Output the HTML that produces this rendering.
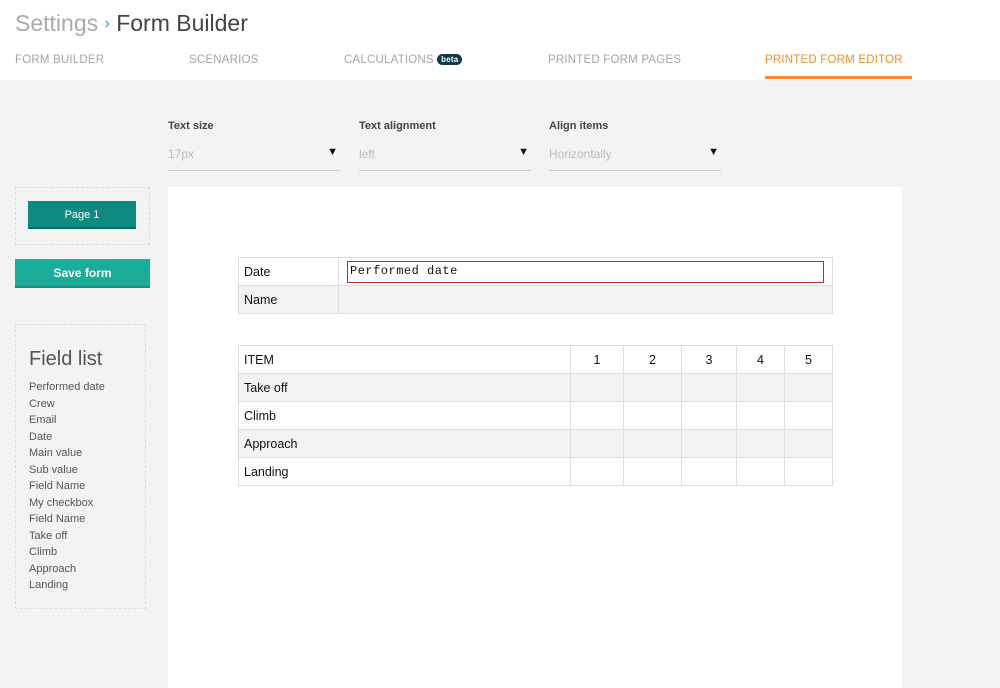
<!DOCTYPE html><html><head><style>
*{margin:0;padding:0;box-sizing:border-box}
body{width:1000px;height:688px;background:#f1f4f3;font-family:"Liberation Sans",sans-serif;position:relative;overflow:hidden}
.a{position:absolute}
.hdr{left:0;top:0;width:1000px;height:80px;background:#fff}
.tab{top:54px;font-size:11.5px;color:#a5a5a5;letter-spacing:.2px}
.lbl{font-size:11px;font-weight:bold;color:#444;top:120px}
.sel{top:143px;height:28px;border-bottom:1px solid #ccc;font-size:12px;color:#bbb;padding-top:4px}
.sel span{position:absolute;right:2px;top:3px;color:#111;font-size:11px}
table{border-collapse:collapse;font-size:12.5px;color:#111}
td{border:1px solid #ddd;height:28px;padding:0 5px}
tr.g td{background:#f1f3f2}
.fl div{font-size:11px;color:#555;height:16.5px}
</style></head><body>
<div class="a hdr"></div>
<div class="a" style="left:15px;top:10px;font-size:23px;color:#aaa">Settings <span style="color:#3aa6a0;font-size:16px;position:relative;top:-3px">›</span> <span style="color:#444">Form Builder</span></div>
<div class="a tab" style="left:15px">FORM BUILDER</div>
<div class="a tab" style="left:189px">SCENARIOS</div>
<div class="a tab" style="left:344px">CALCULATIONS <span style="background:#0f3a4a;color:#fff;font-size:8px;font-weight:bold;border-radius:8px;padding:1px 4px;position:relative;top:-1px">beta</span></div>
<div class="a tab" style="left:548px">PRINTED FORM PAGES</div>
<div class="a tab" style="left:765px;color:#e8912c">PRINTED FORM EDITOR</div>
<div class="a" style="left:765px;top:76px;width:147px;height:3px;background:#f0932f"></div>

<div class="a lbl" style="left:168px">Text size</div>
<div class="a lbl" style="left:359px">Text alignment</div>
<div class="a lbl" style="left:549px">Align items</div>
<div class="a sel" style="left:168px;width:172px">17px<span>▼</span></div>
<div class="a sel" style="left:359px;width:172px">left<span>▼</span></div>
<div class="a sel" style="left:549px;width:172px">Horizontally<span>▼</span></div>

<div class="a" style="left:15px;top:187px;width:135px;height:58px;border:1px dashed #ddd"></div>
<div class="a" style="left:28px;top:201px;width:108px;height:28px;background:#0e8a80;color:#fff;font-size:11px;text-align:center;line-height:28px;border-bottom:2px solid #0a6e66">Page 1</div>
<div class="a" style="left:15px;top:259px;width:135px;height:29px;background:#1bac9a;color:#fff;font-size:12px;font-weight:bold;text-align:center;line-height:29px;border-bottom:2px solid #139080">Save form</div>

<div class="a fl" style="left:15px;top:324px;width:131px;height:285px;border:1px dashed #ddd;padding:23px 0 0 13px">
<div style="font-size:20px;color:#555;height:33px">Field list</div>
<div>Performed date</div><div>Crew</div><div>Email</div><div>Date</div><div>Main value</div><div>Sub value</div><div>Field Name</div><div>My checkbox</div><div>Field Name</div><div>Take off</div><div>Climb</div><div>Approach</div><div>Landing</div>
</div>

<div class="a" style="left:168px;top:187px;width:734px;height:501px;background:#fff"></div>
<table class="a" style="left:238px;top:257px;width:595px">
<tr><td style="width:100px">Date</td><td style="padding:2px 8px 2px 8px"><div style="border:1px solid #a33;height:22px;font-family:'Liberation Mono',monospace;font-size:12px;padding:3px 0 0 2px;line-height:12px;letter-spacing:.5px">Performed date</div></td></tr>
<tr class="g"><td>Name</td><td></td></tr>
</table>
<table class="a" style="left:238px;top:345px;width:595px">
<tr><td style="width:332px">ITEM</td><td style="width:53px;text-align:center">1</td><td style="width:58px;text-align:center">2</td><td style="width:55px;text-align:center">3</td><td style="width:48px;text-align:center">4</td><td style="text-align:center">5</td></tr>
<tr class="g"><td>Take off</td><td></td><td></td><td></td><td></td><td></td></tr>
<tr><td>Climb</td><td></td><td></td><td></td><td></td><td></td></tr>
<tr class="g"><td>Approach</td><td></td><td></td><td></td><td></td><td></td></tr>
<tr><td>Landing</td><td></td><td></td><td></td><td></td><td></td></tr>
</table>
</body></html>
